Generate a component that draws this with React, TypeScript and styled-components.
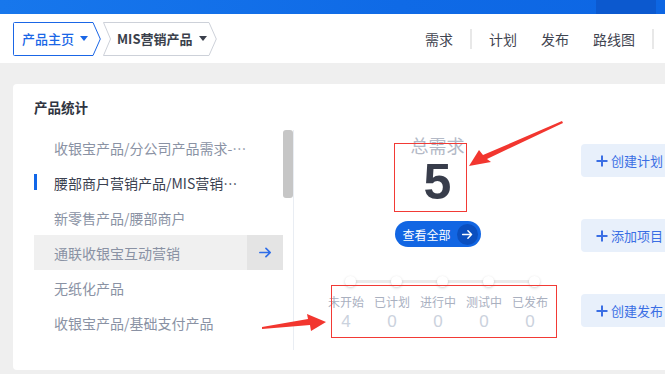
import React from "react";
import styled, { createGlobalStyle } from "styled-components";

const GlobalStyle = createGlobalStyle`
  html, body { margin: 0; padding: 0; }
  body {
    background: #efefef;
    font-family: "Noto Sans CJK SC", "Noto Sans", sans-serif;
    overflow: hidden;
  }
  * { box-sizing: border-box; }
`;

const Page = styled.div`
  position: relative;
  width: 665px;
  height: 374px;
  overflow: hidden;
  background: #efefef;
`;

const TopBar = styled.div`
  height: 14px;
  display: flex;
  background: linear-gradient(90deg, #1777ec 0%, #0f6ae6 60%, #0d66e3 100%);
`;

const TopBarBlock = styled.div`
  margin-left: 596px;
  width: 60px;
  background: #0c59cf;
`;

const Header = styled.div`
  height: 49px;
  background: #fff;
  display: flex;
  align-items: center;
  padding-left: 13px;
  white-space: nowrap;
`;

const Breadcrumbs = styled.div`
  display: flex;
  align-items: center;
  gap: 2px;
`;

const Crumb = styled.div<{ $w: number; $pl: number; $active?: boolean }>`
  position: relative;
  width: ${(p) => p.$w}px;
  height: 34px;
  display: flex;
  align-items: center;
  padding-left: ${(p) => p.$pl}px;
  font-size: 13px;
  font-weight: ${(p) => (p.$active ? 500 : 700)};
  color: ${(p) => (p.$active ? "#1a66e6" : "#3a3f4b")};
`;

const CrumbShape = styled.svg`
  position: absolute;
  inset: 0;
  pointer-events: none;
`;

const CrumbLabel = styled.span`
  position: relative;
  line-height: 18px;
`;

const Caret = styled.span<{ $color: string }>`
  position: relative;
  margin-left: 6px;
  width: 0;
  height: 0;
  border-left: 4px solid transparent;
  border-right: 4px solid transparent;
  border-top: 5px solid ${(p) => p.$color};
`;

const Nav = styled.div`
  display: flex;
  align-items: center;
  margin-left: 196px;
`;

const NavItem = styled.span`
  padding: 0 12px;
  font-size: 14px;
  line-height: 20px;
  color: #3f4450;
`;

const NavSep = styled.span`
  width: 2px;
  height: 20px;
  margin: 0 5px;
  background: #e8e8e8;
`;

const Main = styled.div`
  padding: 21px 0 0 13px;
`;

const Card = styled.div`
  width: 720px;
  height: 286px;
  background: #fff;
  border-radius: 4px;
  padding: 13px 0 0 21px;
`;

const CardTitle = styled.div`
  font-size: 13.5px;
  font-weight: 700;
  line-height: 20px;
  color: #2f3440;
  margin-bottom: 13px;
`;

const CardBody = styled.div`
  display: flex;
  align-items: flex-start;
`;

const ProductList = styled.div`
  width: 249px;
  display: flex;
  flex-direction: column;
`;

const Item = styled.div<{ $active?: boolean; $hover?: boolean }>`
  position: relative;
  height: 35px;
  display: flex;
  align-items: center;
  padding-left: 20px;
  font-size: 14px;
  color: ${(p) => (p.$active ? "#3b4150" : "#8a92a4")};
  background: ${(p) => (p.$hover ? "#f0f0f0" : "transparent")};
`;

const ItemText = styled.span`
  flex: 1;
  max-width: 197px;
  overflow: hidden;
  text-overflow: ellipsis;
  white-space: nowrap;
  line-height: 20px;
`;

const ActiveMark = styled.span`
  position: absolute;
  left: 0;
  top: 9px;
  width: 3px;
  height: 16px;
  background: #1167e8;
`;

const GoBox = styled.span`
  margin-left: auto;
  width: 36px;
  height: 100%;
  background: #e4e4e4;
  display: flex;
  align-items: center;
  justify-content: center;
`;

const Scrollbar = styled.div`
  width: 10px;
  height: 210px;
`;

const Thumb = styled.div`
  height: 68px;
  border-radius: 3px;
  background: #c6c6c6;
`;

const Divider = styled.div`
  width: 1px;
  height: 220px;
  background: #e9edf3;
`;

const Summary = styled.div`
  width: 287px;
  display: flex;
  flex-direction: column;
  align-items: center;
`;

const TotalLabel = styled.div`
  margin-top: 3px;
  font-size: 18px;
  line-height: 24px;
  color: #b3b9c6;
`;

const TotalValue = styled.div`
  font-family: "Liberation Sans", Arial, sans-serif;
  font-size: 50px;
  font-weight: 700;
  line-height: 50px;
  color: #383d4b;
`;

const ViewAll = styled.div`
  margin-top: 14px;
  width: 86px;
  height: 26px;
  border-radius: 13px;
  background: #1266e3;
  display: flex;
  align-items: center;
  padding: 0 3px 0 8px;
  color: #fff;
  font-size: 12px;
`;

const ViewAllIcon = styled.span`
  margin-left: auto;
  width: 21px;
  height: 21px;
  border-radius: 50%;
  background: #0b4fbf;
  display: flex;
  align-items: center;
  justify-content: center;
`;

const Steps = styled.div`
  align-self: flex-start;
  margin-left: 29px;
  margin-top: 29px;
  display: flex;
  position: relative;
`;

const Step = styled.div`
  width: 46px;
  display: flex;
  flex-direction: column;
  align-items: center;
  position: relative;
`;

const StepTrack = styled.div`
  position: absolute;
  left: 27px;
  right: 19px;
  top: 4px;
  height: 3px;
  background: #ebebeb;
`;

const Dot = styled.span`
  position: relative;
  left: 4px;
  width: 11px;
  height: 11px;
  border-radius: 50%;
  background: #fff;
  box-shadow: 0 1px 3px rgba(0, 0, 0, 0.18);
`;

const StepLabel = styled.span`
  margin-top: 6px;
  font-size: 12px;
  line-height: 18px;
  color: #a9b0bf;
  white-space: nowrap;
`;

const StepValue = styled.span`
  font-family: "Liberation Sans", Arial, sans-serif;
  font-size: 17px;
  line-height: 22px;
  color: #cbd2dd;
`;

const Actions = styled.div`
  padding-top: 14px;
  display: flex;
  flex-direction: column;
  gap: 42px;
`;

const ActionButton = styled.div`
  width: 110px;
  height: 33px;
  border-radius: 4px;
  background: #e8f0fb;
  display: flex;
  align-items: center;
  gap: 3px;
  padding-left: 15px;
  font-size: 13px;
  color: #3a6ee4;
  white-space: nowrap;
`;

const Annotations = styled.svg`
  position: absolute;
  inset: 0;
  pointer-events: none;
`;

const products = [
  "收银宝产品/分公司产品需求-业务需求池",
  "腰部商户营销产品/MIS营销产品",
  "新零售产品/腰部商户",
  "通联收银宝互动营销",
  "无纸化产品",
  "收银宝产品/基础支付产品",
];

const steps = [
  ["未开始", "4"],
  ["已计划", "0"],
  ["进行中", "0"],
  ["测试中", "0"],
  ["已发布", "0"],
];

const actions = ["创建计划", "添加项目", "创建发布"];

const Plus = () => (
  <svg width="12" height="12" viewBox="0 0 12 12">
    <path d="M6 0.5v11M0.5 6h11" stroke="#3a6ee4" strokeWidth="2" />
  </svg>
);

const ArrowRight = ({ color, size }: { color: string; size: number }) => (
  <svg width={size} height={size} viewBox="0 0 16 16" fill="none">
    <path
      d="M2 8h11M8.5 3.5L13 8l-4.5 4.5"
      stroke={color}
      strokeWidth="1.8"
      strokeLinecap="round"
      strokeLinejoin="round"
    />
  </svg>
);

export default function App() {
  return (
    <>
      <GlobalStyle />
      <Page>
        <TopBar>
          <TopBarBlock />
        </TopBar>
        <Header>
          <Breadcrumbs>
            <Crumb $w={88} $pl={9} $active>
              <CrumbShape width="88" height="34" viewBox="0 0 88 34">
                <path
                  d="M1.5 0.5H80L87.3 17L80 33.5H1.5Q0.5 33.5 0.5 32.5V1.5Q0.5 0.5 1.5 0.5Z"
                  fill="#fff"
                  stroke="#1a66e6"
                />
              </CrumbShape>
              <CrumbLabel>产品主页</CrumbLabel>
              <Caret $color="#1a66e6" />
            </Crumb>
            <Crumb $w={114} $pl={14}>
              <CrumbShape width="114" height="34" viewBox="0 0 114 34">
                <path
                  d="M0.5 0.5H106L113.3 17L106 33.5H0.5L7.5 17Z"
                  fill="#fff"
                  stroke="#cdd1d9"
                />
              </CrumbShape>
              <CrumbLabel>MIS营销产品</CrumbLabel>
              <Caret $color="#3a3f4b" />
            </Crumb>
          </Breadcrumbs>
          <Nav>
            <NavItem>需求</NavItem>
            <NavSep />
            <NavItem>计划</NavItem>
            <NavItem>发布</NavItem>
            <NavItem>路线图</NavItem>
            <NavSep />
          </Nav>
        </Header>
        <Main>
          <Card>
            <CardTitle>产品统计</CardTitle>
            <CardBody>
              <ProductList>
                {products.map((p, i) => (
                  <Item key={p} $active={i === 1} $hover={i === 3}>
                    {i === 1 && <ActiveMark />}
                    <ItemText>{p}</ItemText>
                    {i === 3 && (
                      <GoBox>
                        <ArrowRight color="#2f6ee8" size={15} />
                      </GoBox>
                    )}
                  </Item>
                ))}
              </ProductList>
              <Scrollbar>
                <Thumb />
              </Scrollbar>
              <Divider />
              <Summary>
                <TotalLabel>总需求</TotalLabel>
                <TotalValue>5</TotalValue>
                <ViewAll>
                  查看全部
                  <ViewAllIcon>
                    <ArrowRight color="#fff" size={13} />
                  </ViewAllIcon>
                </ViewAll>
                <Steps>
                  <StepTrack />
                  {steps.map(([label, value]) => (
                    <Step key={label}>
                      <Dot />
                      <StepLabel>{label}</StepLabel>
                      <StepValue>{value}</StepValue>
                    </Step>
                  ))}
                </Steps>
              </Summary>
              <Actions>
                {actions.map((a) => (
                  <ActionButton key={a}>
                    <Plus />
                    {a}
                  </ActionButton>
                ))}
              </Actions>
            </CardBody>
          </Card>
        </Main>
        <Annotations width="665" height="374" viewBox="0 0 665 374">
          <rect x="394.5" y="143.5" width="72" height="68" fill="none" stroke="#f23a35" strokeWidth="1" />
          <rect x="331.5" y="285.5" width="225" height="52" fill="none" stroke="#f23a35" strokeWidth="1" />
          <polygon
            points="562,121 563,123 487,159 491,162 469,166 479,150 483,155"
            fill="#f2362f"
          />
          <polygon
            points="262,327 308,319 307,314 326,322 311,331 310,325 262,329"
            fill="#f2362f"
          />
        </Annotations>
      </Page>
    </>
  );
}
